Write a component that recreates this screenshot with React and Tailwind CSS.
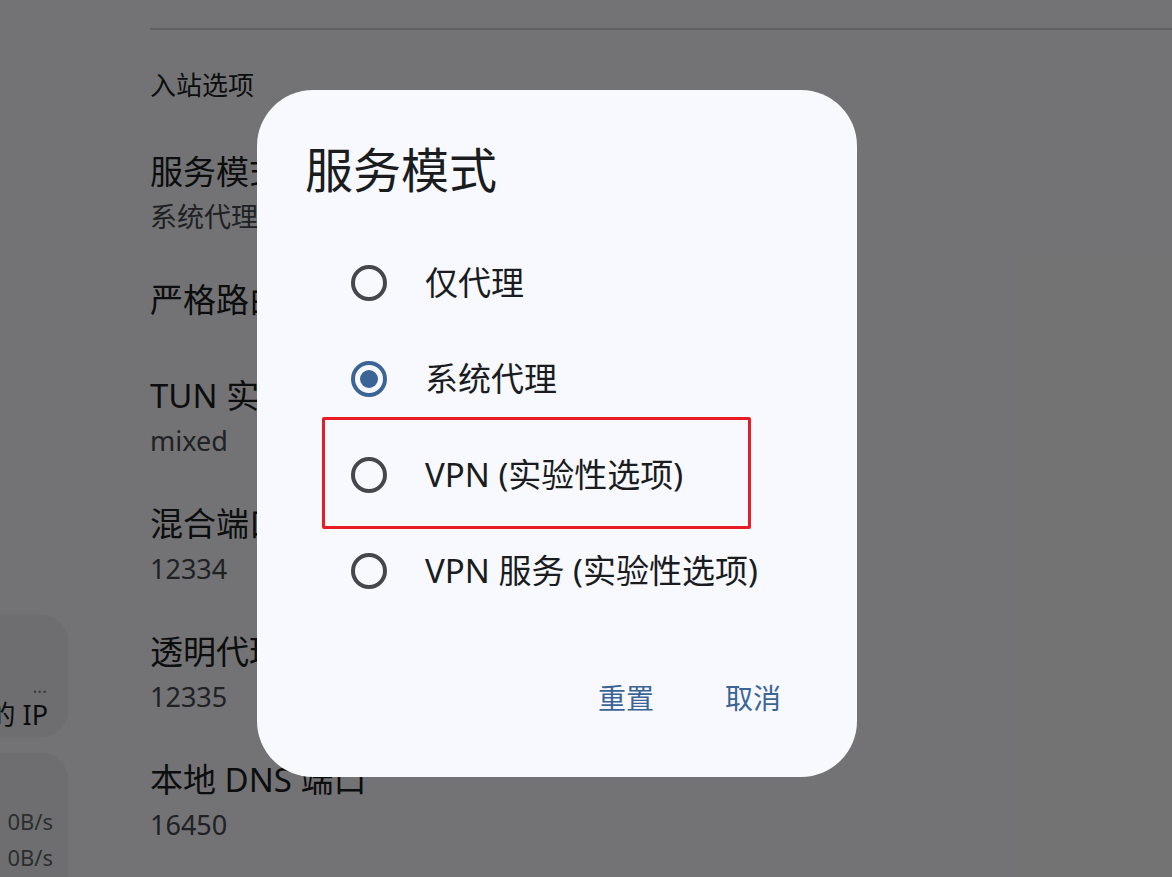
import { useState } from "react";

const font = "font-['Noto_Sans','Noto_Sans_CJK_SC',sans-serif]";

const settings = [
  { title: "服务模式", value: "系统代理" },
  { title: "严格路由" },
  { title: "TUN 实现", value: "mixed" },
  { title: "混合端口", value: "12334" },
  { title: "透明代理端口", value: "12335" },
  { title: "本地 DNS 端口", value: "16450" }
];

const modes = ["仅代理", "系统代理", "VPN (实验性选项)", "VPN 服务 (实验性选项)"];

function SettingRow({ title, value }) {
  if (!value) {
    return (
      <div className="h-[96px] pt-[22px] text-[33px] leading-[44px] text-[#1a1c1e] whitespace-nowrap">
        {title}
      </div>
    );
  }
  return (
    <div className="h-[128px] pt-[22px] whitespace-nowrap">
      <div className="text-[33px] leading-[44px] text-[#1a1c1e]">{title}</div>
      <div className="pt-[3px] text-[27px] leading-[40px] text-[#44474e]">{value}</div>
    </div>
  );
}

function Radio({ checked }) {
  return (
    <span
      className={
        "flex h-[36px] w-[36px] shrink-0 items-center justify-center rounded-full border-[4px] " +
        (checked ? "border-[#3c6597]" : "border-[#44474e]")
      }
    >
      {checked && <span className="h-[18px] w-[18px] rounded-full bg-[#3c6597]" />}
    </span>
  );
}

export default function App() {
  const [mode, setMode] = useState(1);

  return (
    <div className={`relative h-[877px] w-full overflow-hidden bg-[#f9f9fc] ${font}`}>
      <div className="flex h-full">
        {/* left column, mostly scrolled off */}
        <aside className="flex w-[150px] shrink-0 flex-col gap-[16px] pt-[615px]">
          <div className="flex h-[122px] w-[68px] shrink-0 flex-col items-end justify-end rounded-r-[26px] bg-[#eeeef2] pb-[3px] pr-[20px]">
            <span className="pr-[1px] text-[18px] leading-[20px] text-[#7a7c82]">...</span>
            <span className="text-[27px] leading-[38px] text-[#1a1c1e] whitespace-nowrap">的 IP</span>
          </div>
          <div className="flex h-[160px] w-[68px] shrink-0 flex-col items-end rounded-r-[26px] bg-[#eeeef2] pt-[50px] pr-[15px]">
            <span className="text-[22px] leading-[36px] text-[#5f6268]">0B/s</span>
            <span className="text-[22px] leading-[36px] text-[#5f6268]">0B/s</span>
          </div>
        </aside>

        {/* settings list */}
        <main className="flex-1 pt-[28px]">
          <div className="border-t-2 border-[#cdced3]" />
          <div className="pt-[37px] pb-[25px] text-[26px] leading-[36px] text-[#1a1c1e]">入站选项</div>
          {settings.map((s) => (
            <SettingRow key={s.title} {...s} />
          ))}
        </main>
      </div>

      {/* scrim + dialog */}
      <div className="absolute inset-0 flex items-center justify-center bg-black/[0.538] pr-[58px] pb-[10px]">
        <div className="w-[600px] rounded-[56px] bg-[#f8f9fe] px-[48px] pt-[48px] pb-[39px]">
          <h2 className="text-[48px] leading-[64px] text-[#1a1c1e]">服务模式</h2>
          <div className="mt-[33px]">
            {modes.map((label, i) => (
              <div
                key={label}
                onClick={() => setMode(i)}
                className="relative flex h-[96px] cursor-pointer items-center pl-[46px]"
              >
                <Radio checked={mode === i} />
                <span className="ml-[38px] text-[33px] leading-[44px] text-[#1a1c1e] whitespace-nowrap">
                  {label}
                </span>
                {i === 2 && (
                  <span className="pointer-events-none absolute left-[17px] top-[-10px] h-[112px] w-[429px] rounded-[2px] border-[3px] border-[#e81c24]" />
                )}
              </div>
            ))}
          </div>
          <div className="mt-[39px] flex h-[80px] items-center justify-end gap-[23px] pr-[4px]">
            <button className="px-[24px] text-[28px] leading-[40px] text-[#3c6597]">重置</button>
            <button className="px-[24px] text-[28px] leading-[40px] text-[#3c6597]">取消</button>
          </div>
        </div>
      </div>
    </div>
  );
}
